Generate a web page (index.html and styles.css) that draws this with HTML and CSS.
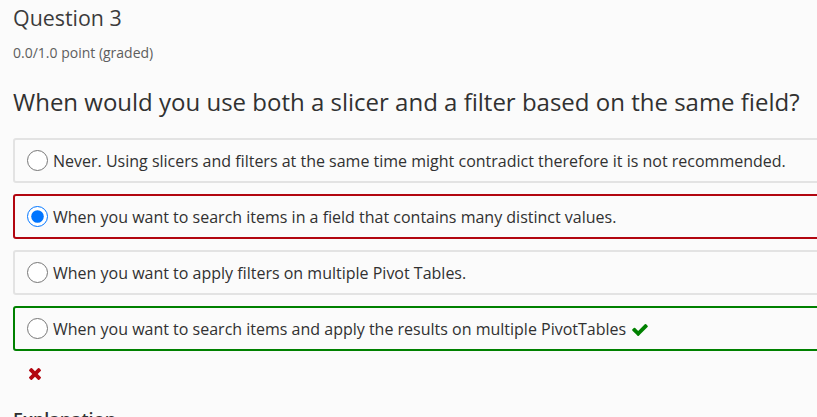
FILE: index.html
```html
<!DOCTYPE html>
<html lang="en">
<head>
<meta charset="utf-8">
<title>Question 3</title>
<link rel="stylesheet" href="styles.css">
</head>
<body>
<div class="page">
  <h3 class="q-title">Question 3</h3>
  <div class="q-points">0.0/1.0 point (graded)</div>
  <p class="q-text">When would you use both a slicer and a filter based on the same field?</p>
  <div class="choices">
    <label class="choice">
      <input type="radio" name="q3">
      <span class="choice-text">Never. Using slicers and filters at the same time might contradict therefore it is not recommended.</span>
    </label>
    <label class="choice choice-incorrect">
      <input type="radio" name="q3" checked>
      <span class="choice-text">When you want to search items in a field that contains many distinct values.</span>
    </label>
    <label class="choice">
      <input type="radio" name="q3">
      <span class="choice-text">When you want to apply filters on multiple Pivot Tables.</span>
    </label>
    <label class="choice choice-correct">
      <input type="radio" name="q3">
      <span class="choice-text">When you want to search items and apply the results on multiple PivotTables
        <svg class="icon-check" viewBox="121 334 1550 1188" aria-hidden="true"><path d="M1671 566q0 40-28 68l-724 724-136 136q-28 28-68 28t-68-28l-136-136-362-362q-28-28-28-68t28-68l136-136q28-28 68-28t68 28l294 295 656-657q28-28 68-28t68 28l136 136q28 28 28 68z"/></svg>
      </span>
    </label>
  </div>
  <div class="status">
    <svg class="icon-times" viewBox="302 366 1188 1188" aria-hidden="true"><path d="M1490 1322q0 40-28 68l-136 136q-28 28-68 28t-68-28l-294-294-294 294q-28 28-68 28t-68-28l-136-136q-28-28-28-68t28-68l294-294-294-294q-28-28-28-68t28-68l136-136q28-28 68-28t68 28l294 294 294-294q28-28 68-28t68 28l136 136q28 28 28 68t-28 68l-294 294 294 294q28 28 28 68z"/></svg>
  </div>
  <h4 class="explanation">Explanation</h4>
</div>
</body>
</html>
```
FILE: styles.css
```css
html, body {
  margin: 0;
  padding: 0;
  overflow: hidden;
  background: #fbfbfb;
}

body {
  font-family: "Open Sans", "Noto Sans", sans-serif;
  color: #313131;
}

.page {
  width: 860px;
  padding: 0 0 0 13px;
}

.q-title {
  margin: 0;
  padding-top: 4px;
  font-size: 21.4px;
  line-height: 28px;
  font-weight: 400;
  color: #3b3b3b;
}

.q-points {
  margin-top: 12px;
  font-size: 14px;
  line-height: 18px;
  color: #5e5e5e;
}

.q-text {
  margin: 24px 0 0;
  font-size: 24px;
  line-height: 32px;
  color: #313131;
}

.choices {
  margin-top: 20px;
  display: flex;
  flex-direction: column;
  gap: 11px;
}

.choice {
  display: flex;
  align-items: center;
  min-height: 41px;
  padding: 0 12px;
  border: 2px solid #e3e3e3;
  border-radius: 3px;
  font-size: 16px;
  line-height: 22px;
  color: #313131;
}

.choice-incorrect {
  border-color: #b20610;
}

.choice-correct {
  border-color: #008100;
}

.choice input {
  width: 21px;
  height: 21px;
  margin: 0 5px 0 0;
  flex: none;
}

.icon-check {
  width: 16px;
  height: 12px;
  fill: #008100;
  vertical-align: -1px;
  margin-left: 2px;
}

.status {
  padding: 17px 0 0 16px;
  height: 12px;
}

.icon-times {
  width: 12px;
  height: 12px;
  fill: #b20610;
  display: block;
}

.explanation {
  margin: 27px 0 0;
  font-size: 18px;
  line-height: 24px;
  font-weight: 600;
  color: #313131;
}
```
